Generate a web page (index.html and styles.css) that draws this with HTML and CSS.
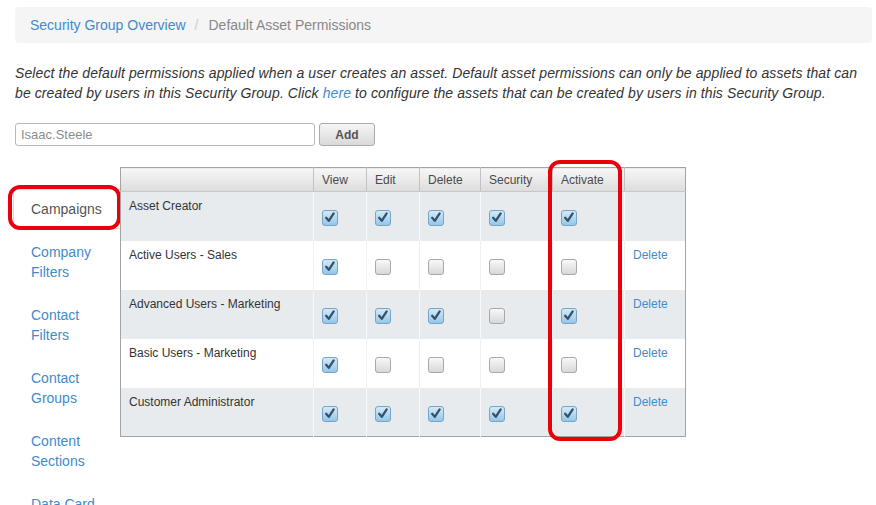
FILE: index.html
```html
<!DOCTYPE html>
<html>
<head>
<meta charset="utf-8">
<link rel="stylesheet" href="styles.css">
</head>
<body>
<div class="page">
  <div class="breadcrumb">
    <a class="crumb-link" href="#">Security Group Overview</a><span class="sep">/</span><span class="crumb-current">Default Asset Permissions</span>
  </div>
  <p class="intro">Select the default permissions applied when a user creates an asset. Default asset permissions can only be applied to assets that can be created by users in this Security Group. Click <a href="#" class="inline-link">here</a> to configure the assets that can be created by users in this Security Group.</p>
  <div class="add-row">
    <input class="user-input" type="text" placeholder="Isaac.Steele">
    <button class="add-btn">Add</button>
  </div>
  <div class="content">
    <ul class="nav">
      <li class="nav-item active"><span class="nav-label">Campaigns</span><span class="highlight nav-highlight"></span></li>
      <li class="nav-item"><a href="#">Company Filters</a></li>
      <li class="nav-item"><a href="#">Contact Filters</a></li>
      <li class="nav-item"><a href="#">Contact Groups</a></li>
      <li class="nav-item"><a href="#">Content Sections</a></li>
      <li class="nav-item"><a href="#">Data Card Sets</a></li>
    </ul>
    <div class="table-wrap">
      <table class="perm">
        <colgroup>
          <col class="c-name"><col class="c-53"><col class="c-53"><col class="c-61"><col class="c-72"><col class="c-72"><col class="c-61">
        </colgroup>
        <thead>
          <tr><th></th><th>View</th><th>Edit</th><th>Delete</th><th>Security</th><th>Activate</th><th></th></tr>
        </thead>
        <tbody>
          <tr class="odd"><td>Asset Creator</td>
            <td><span class="cb on"><svg viewBox="0 0 16 16"><path d="M3.6 7.8 L6.6 11.2 L12.2 2.8"/></svg></span></td>
            <td><span class="cb on"><svg viewBox="0 0 16 16"><path d="M3.6 7.8 L6.6 11.2 L12.2 2.8"/></svg></span></td>
            <td><span class="cb on"><svg viewBox="0 0 16 16"><path d="M3.6 7.8 L6.6 11.2 L12.2 2.8"/></svg></span></td>
            <td><span class="cb on"><svg viewBox="0 0 16 16"><path d="M3.6 7.8 L6.6 11.2 L12.2 2.8"/></svg></span></td>
            <td><span class="cb on"><svg viewBox="0 0 16 16"><path d="M3.6 7.8 L6.6 11.2 L12.2 2.8"/></svg></span></td>
            <td></td></tr>
          <tr><td>Active Users - Sales</td>
            <td><span class="cb on"><svg viewBox="0 0 16 16"><path d="M3.6 7.8 L6.6 11.2 L12.2 2.8"/></svg></span></td>
            <td><span class="cb"></span></td>
            <td><span class="cb"></span></td>
            <td><span class="cb"></span></td>
            <td><span class="cb"></span></td>
            <td><a href="#" class="del">Delete</a></td></tr>
          <tr class="odd"><td>Advanced Users - Marketing</td>
            <td><span class="cb on"><svg viewBox="0 0 16 16"><path d="M3.6 7.8 L6.6 11.2 L12.2 2.8"/></svg></span></td>
            <td><span class="cb on"><svg viewBox="0 0 16 16"><path d="M3.6 7.8 L6.6 11.2 L12.2 2.8"/></svg></span></td>
            <td><span class="cb on"><svg viewBox="0 0 16 16"><path d="M3.6 7.8 L6.6 11.2 L12.2 2.8"/></svg></span></td>
            <td><span class="cb"></span></td>
            <td><span class="cb on"><svg viewBox="0 0 16 16"><path d="M3.6 7.8 L6.6 11.2 L12.2 2.8"/></svg></span></td>
            <td><a href="#" class="del">Delete</a></td></tr>
          <tr><td>Basic Users - Marketing</td>
            <td><span class="cb on"><svg viewBox="0 0 16 16"><path d="M3.6 7.8 L6.6 11.2 L12.2 2.8"/></svg></span></td>
            <td><span class="cb"></span></td>
            <td><span class="cb"></span></td>
            <td><span class="cb"></span></td>
            <td><span class="cb"></span></td>
            <td><a href="#" class="del">Delete</a></td></tr>
          <tr class="odd"><td>Customer Administrator</td>
            <td><span class="cb on"><svg viewBox="0 0 16 16"><path d="M3.6 7.8 L6.6 11.2 L12.2 2.8"/></svg></span></td>
            <td><span class="cb on"><svg viewBox="0 0 16 16"><path d="M3.6 7.8 L6.6 11.2 L12.2 2.8"/></svg></span></td>
            <td><span class="cb on"><svg viewBox="0 0 16 16"><path d="M3.6 7.8 L6.6 11.2 L12.2 2.8"/></svg></span></td>
            <td><span class="cb on"><svg viewBox="0 0 16 16"><path d="M3.6 7.8 L6.6 11.2 L12.2 2.8"/></svg></span></td>
            <td><span class="cb on"><svg viewBox="0 0 16 16"><path d="M3.6 7.8 L6.6 11.2 L12.2 2.8"/></svg></span></td>
            <td><a href="#" class="del">Delete</a></td></tr>
        </tbody>
      </table>
      <span class="highlight col-highlight"></span>
    </div>
  </div>
</div>
</body>
</html>
```
FILE: styles.css
```css
html, body {
  margin: 0;
  padding: 0;
  background: #fff;
  overflow: hidden;
}
body {
  font-family: "Liberation Sans", Arial, sans-serif;
  color: #333;
  font-size: 14px;
  line-height: 20px;
}
a { text-decoration: none; color: #428bca; }
.page {
  padding: 7px 4px 0 15px;
}
.breadcrumb {
  background: #f5f5f5;
  border-radius: 4px;
  padding: 8px 15px;
  height: 20px;
  font-size: 14px;
}
.crumb-link { color: #428bca; }
.sep { color: #ccc; padding: 0 10px 0 9px; }
.crumb-current { color: #888; }
.intro {
  margin: 20px 0;
  font-style: italic;
  color: #333;
  letter-spacing: 0.1px;
}
.inline-link { color: #428bca; }
.add-row {
  display: flex;
  gap: 4px;
  height: 23px;
}
.user-input {
  box-sizing: border-box;
  width: 300px;
  height: 23px;
  border: 1px solid #b8b8b8;
  border-radius: 3px;
  padding: 0 5px;
  font-family: "Liberation Sans", Arial, sans-serif;
  font-size: 13px;
  color: #555;
}
.user-input::placeholder { color: #8c8c8c; }
.add-btn {
  box-sizing: border-box;
  width: 56px;
  height: 23px;
  border: 1px solid #aaa;
  border-radius: 3px;
  background: linear-gradient(#f6f6f6, #d9d9d9);
  font-family: "Liberation Sans", Arial, sans-serif;
  font-weight: bold;
  font-size: 12px;
  color: #555;
  padding: 0;
}
.content {
  display: flex;
  margin-top: 21px;
}
.nav {
  list-style: none;
  margin: 0;
  padding: 22px 0 0 0;
  width: 105px;
}
.nav-item {
  position: relative;
  padding: 10px 16px;
  margin-bottom: 3px;
  font-size: 14px;
  line-height: 20px;
}
.nav-item.active {
  border: 1px solid #ddd;
  border-right: none;
  border-radius: 4px 0 0 4px;
  padding: 9px 15px;
  margin-left: -2px;
  margin-right: -1px;
  padding-left: 17px;
  background: #fff;
}
.nav-label { color: #555; }
.highlight {
  position: absolute;
  box-sizing: border-box;
  border: 4px solid #e8000b;
  border-radius: 12px;
  pointer-events: none;
}
.nav-highlight {
  left: -6px;
  top: -5px;
  width: 113px;
  height: 45px;
}
.table-wrap {
  position: relative;
  width: 565px;
}
.perm {
  border-collapse: collapse;
  table-layout: fixed;
  width: 565px;
  border: 1px solid #a3a3a3;
  font-size: 12px;
  line-height: 16px;
}
.c-name { width: 193px; }
.c-53 { width: 53px; }
.c-61 { width: 61px; }
.c-72 { width: 72px; }
.perm th {
  height: 24px;
  box-sizing: border-box;
  padding: 0 8px;
  text-align: left;
  font-weight: normal;
  color: #4a4a4a;
  background: linear-gradient(#f7f7f7, #dcdcdc);
  border-left: 1px solid #c2c2c2;
  border-bottom: 1px solid #c8c8c8;
}
.perm td {
  height: 49px;
  box-sizing: border-box;
  padding: 6px 8px 0 8px;
  vertical-align: top;
  border-left: 1px solid #efefef;
  color: #333;
}
.perm td:first-child { border-left: none; }
.perm th:first-child { border-left: none; }
.perm tr.odd td { background: #e8ebee; border-left-color: #f7f8f9; }
.perm tr.odd td:first-child { border-left: none; }
.cb {
  display: inline-block;
  box-sizing: border-box;
  width: 16px;
  height: 16px;
  margin-top: 12px;
  border: 1px solid #a8a8a8;
  border-radius: 3px;
  background: linear-gradient(#f8f8f8, #d8d8d8);
  vertical-align: top;
}
.cb.on {
  border-color: #7aa3c4;
  background: linear-gradient(#d2ebfa, #93c7ea);
}
.cb svg {
  display: block;
  width: 14px;
  height: 14px;
  overflow: visible;
}
.cb path {
  fill: none;
  stroke: #3a4e66;
  stroke-width: 2.6;
  stroke-linecap: round;
  stroke-linejoin: round;
}
.del { color: #428bca; font-size: 12px; }
.col-highlight {
  left: 428px;
  top: -7px;
  width: 74px;
  height: 281px;
}
```
